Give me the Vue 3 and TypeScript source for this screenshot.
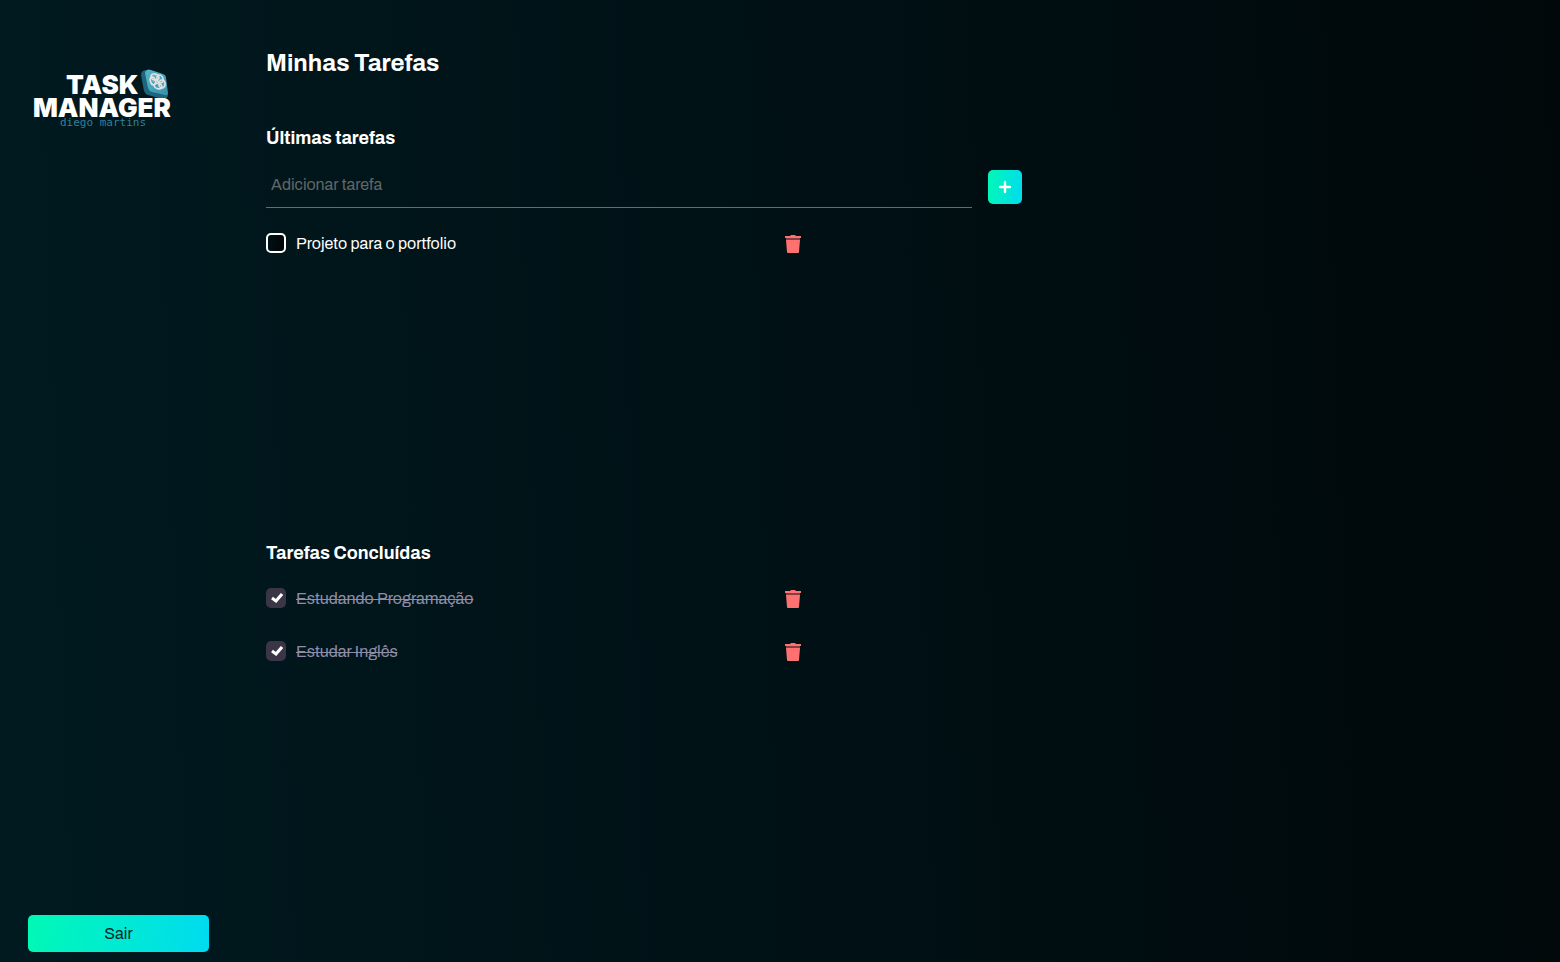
<script setup lang="ts">
import { computed, ref } from 'vue'

interface Task {
  id: number
  title: string
  done: boolean
}

const tasks = ref<Task[]>([
  { id: 1, title: 'Projeto para o portfolio', done: false },
  { id: 2, title: 'Estudando Programação', done: true },
  { id: 3, title: 'Estudar Inglês', done: true },
])
const newTitle = ref('')

const sections = computed(() => [
  { key: 'open', title: 'Últimas tarefas', items: tasks.value.filter((t) => !t.done) },
  { key: 'done', title: 'Tarefas Concluídas', items: tasks.value.filter((t) => t.done) },
])

function addTask(): void {
  const title = newTitle.value.trim()
  if (!title) return
  tasks.value.push({ id: Date.now(), title, done: false })
  newTitle.value = ''
}

function removeTask(id: number): void {
  tasks.value = tasks.value.filter((t) => t.id !== id)
}
</script>

<template>
  <div class="page">
    <aside class="sidebar">
      <svg class="logo" viewBox="0 0 144 64" role="img" aria-label="Task Manager diego martins">
        <defs>
          <linearGradient id="tile" x1="0" y1="0" x2="1" y2="1">
            <stop offset="0" stop-color="#58b5ca" />
            <stop offset="1" stop-color="#3292ad" />
          </linearGradient>
        </defs>
        <text class="logo-name" x="34" y="26">TASK</text>
        <path d="M113 2Q109 3 109 7L112 23Q113 26 116 27L130 31Q136 31 136 27L120 5Z" fill="#1c657b" />
        <path d="M115 2Q116 1 119 2L131 6Q134 7 134 10L136 25Q136 28 133 27L120 24Q117 23 116 20L113 5Q113 3 115 2Z" fill="url(#tile)" />
        <g fill="none" stroke="#8fa9b3" stroke-width="2.6">
          <ellipse cx="123" cy="10" rx="4" ry="3" transform="rotate(20 123 10)" />
          <ellipse cx="130" cy="16" rx="3" ry="4" />
        </g>
        <g fill="none" stroke="#dfe3e5" stroke-width="1.6">
          <ellipse cx="123" cy="9" rx="4" ry="3" transform="rotate(20 123 9)" />
          <ellipse cx="128" cy="11" rx="3" ry="4" transform="rotate(-20 128 11)" />
          <ellipse cx="130" cy="16" rx="3" ry="4" />
          <ellipse cx="126" cy="18" rx="4" ry="2.6" transform="rotate(20 126 18)" />
          <ellipse cx="121" cy="13" rx="2.6" ry="4" transform="rotate(-20 121 13)" />
        </g>
        <text class="logo-name" x="1" y="49">MANAGER</text>
        <text class="logo-author" x="28" y="58">diego martins</text>
      </svg>
      <button class="logout" type="button">Sair</button>
    </aside>

    <main class="content">
      <h1>Minhas Tarefas</h1>
      <section v-for="section in sections" :key="section.key" :class="['group', section.key]">
        <h2>{{ section.title }}</h2>
        <form v-if="section.key === 'open'" class="add" @submit.prevent="addTask">
          <input v-model="newTitle" class="field" type="text" placeholder="Adicionar tarefa" aria-label="Adicionar tarefa" />
          <button class="plus" type="submit" aria-label="Adicionar">
            <svg viewBox="0 0 14 14" aria-hidden="true"><path d="M7 2V12M2 7H12" /></svg>
          </button>
        </form>
        <ul class="list">
          <li v-for="task in section.items" :key="task.id" class="task">
            <label class="task-label">
              <input v-model="task.done" class="check" type="checkbox" />
              <svg v-if="task.done" class="tick" viewBox="0 0 12 10" aria-hidden="true"><path d="M1 5L5 8L11 1" /></svg>
              <span :class="{ finished: task.done }">{{ task.title }}</span>
            </label>
            <button class="remove" type="button" :aria-label="`Excluir ${task.title}`" @click="removeTask(task.id)">
              <svg viewBox="0 0 16 18" aria-hidden="true">
                <path d="M0 1H5L6 0H10L11 1H16V3H0Z" />
                <path d="M1 3H15V5H1Z" opacity="0.5" />
                <path d="M1 5H15L14 17Q14 18 13 18H3Q2 18 2 17Z" />
              </svg>
            </button>
          </li>
        </ul>
      </section>
    </main>
  </div>
</template>

<style>
body {
  background: #00060a;
}
</style>

<style scoped>
.page {
  display: flex;
  box-sizing: border-box;
  min-height: 100vh;
  background: linear-gradient(88deg, #001a20 0%, #00080a 100%);
  color: #fff;
  font-family: Archivo, 'Liberation Sans', Arial, sans-serif;
  font-size: 16px;
  line-height: 22px;
}
.sidebar {
  display: flex;
  flex-direction: column;
  justify-content: space-between;
  box-sizing: border-box;
  width: 238px;
  flex: none;
  padding: 68px 29px 10px 28px;
}
.logo {
  width: 144px;
  height: 64px;
  margin-left: 4px;
}
.logo-name {
  fill: #fff;
  font: 900 26px Inter, sans-serif;
}
.logo-author {
  fill: #2f8198;
  font: 11px 'DejaVu Sans Mono', monospace;
}
.logout {
  height: 37px;
  border: 0;
  border-radius: 5px;
  background: linear-gradient(97deg, #00f9b5, #00dbf0);
  color: #0c2528;
  font: inherit;
}
.content {
  flex: 1;
  padding: 48px 28px;
}
h1,
h2 {
  margin: 0;
  font-weight: 700;
}
h1 {
  margin-bottom: 48px;
  font-size: 24px;
  line-height: 30px;
}
h2 {
  font-size: 18px;
  line-height: 24px;
}
.group.open {
  min-height: 415px;
}
.add {
  display: flex;
  gap: 16px;
  max-width: 756px;
  margin-top: 12px;
}
.field {
  box-sizing: border-box;
  flex: 1;
  height: 46px;
  padding: 0 5px;
  border: 0;
  border-bottom: 1px solid #686b6a;
  background: none;
  color: #fff;
  font: inherit;
  outline: 0;
}
.field::placeholder {
  color: #626768;
}
.plus {
  display: grid;
  place-items: center;
  width: 34px;
  height: 34px;
  margin-top: 8px;
  padding: 0;
  border: 0;
  border-radius: 5px;
  background: linear-gradient(97deg, #00f9b5, #00dbf0);
}
.plus svg {
  width: 14px;
  height: 14px;
  fill: none;
  stroke: #fff;
  stroke-width: 2.4;
  stroke-linecap: round;
}
.list {
  display: flex;
  flex-direction: column;
  gap: 31px;
  max-width: 536px;
  margin: 0;
  padding: 0;
  list-style: none;
}
.open .list {
  margin-top: 25px;
}
.done .list {
  margin-top: 23px;
}
.task {
  display: flex;
  align-items: center;
  justify-content: space-between;
}
.task-label {
  position: relative;
  display: flex;
  align-items: flex-start;
  gap: 10px;
}
.check {
  appearance: none;
  box-sizing: border-box;
  width: 20px;
  height: 20px;
  margin: 0;
  border: 2px solid #fff;
  border-radius: 5px;
  background: linear-gradient(97deg, #001015, #000507);
}
.check:checked {
  border-color: #3a3647;
  background: #3a3647;
}
.tick {
  position: absolute;
  left: 5px;
  top: 5px;
  width: 12px;
  height: 10px;
  fill: none;
  stroke: #fff;
  stroke-width: 3;
  pointer-events: none;
}
.finished {
  color: #8f8ca8;
  text-decoration: line-through;
}
.remove {
  width: 18px;
  height: 20px;
  padding: 1px;
  border: 0;
  background: none;
}
.remove svg {
  display: block;
  width: 16px;
  height: 18px;
  fill: #ff7070;
}
</style>
